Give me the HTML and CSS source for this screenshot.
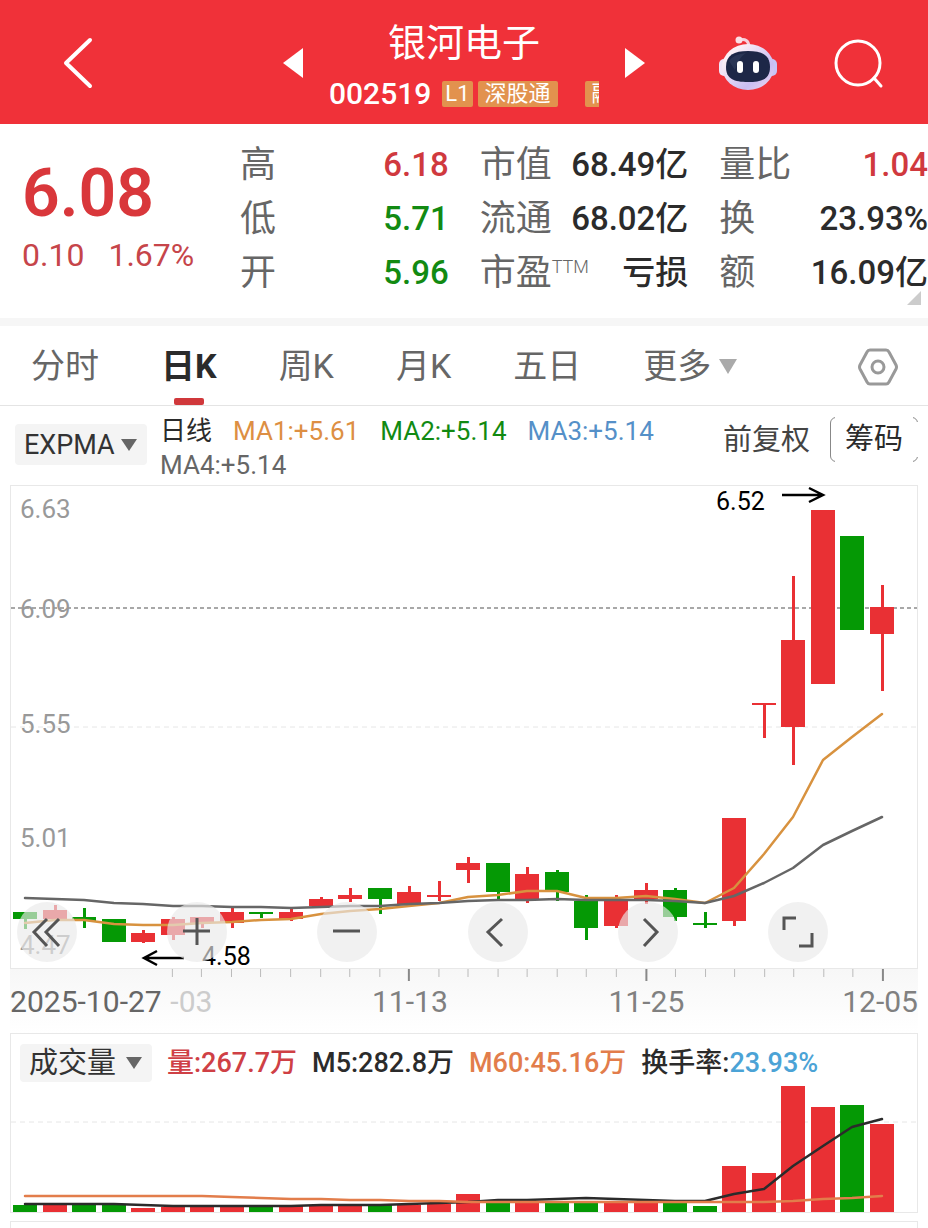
FILE: index.html
```html
<!DOCTYPE html>
<html lang="zh-CN">
<head>
    <meta charset="UTF-8">
    <meta name="viewport" content="width=device-width, initial-scale=1.0">
    <title>银河电子 002519</title>
    <link rel="stylesheet" href="styles.css">
</head>
<body>
    <!-- Header -->
    <header class="header">
        <button class="icon-button back" aria-label="返回">
            <svg width="32" height="54" viewBox="0 0 32 54"><path d="M28 4 L4 27 L28 50" fill="none" stroke="#fff" stroke-width="4" stroke-linecap="round" stroke-linejoin="round"/></svg>
        </button>
        <div class="switcher">
            <button class="icon-button" aria-label="上一只">
                <svg width="20" height="30" viewBox="0 0 20 30"><path d="M0 15 L20 0 V30 Z" fill="#fff"/></svg>
            </button>
            <div class="stock">
                <h1>银河电子</h1>
                <div class="stock-code">
                    <span class="code">002519</span>
                    <span class="tag level">L1</span>
                    <span class="tag">深股通</span>
                    <span class="tag last">融</span>
                </div>
            </div>
            <button class="icon-button" aria-label="下一只">
                <svg width="20" height="30" viewBox="0 0 20 30"><path d="M0 0 L20 15 L0 30 Z" fill="#fff"/></svg>
            </button>
        </div>
        <div class="actions">
            <button class="icon-button" aria-label="智能助手">
                <svg width="60" height="56" viewBox="0 0 60 56">
                    <defs>
                        <linearGradient id="shell" x1="0" y1="0" x2="1" y2="1">
                            <stop offset="0.2" stop-color="#fbeff6"/>
                            <stop offset="0.7" stop-color="#c9bdf2"/>
                            <stop offset="1" stop-color="#f3d9ee"/>
                        </linearGradient>
                    </defs>
                    <path d="M22 4 Q30 2 31 10" fill="none" stroke="#f7cfdc" stroke-width="3"/>
                    <circle cx="21" cy="4" r="3.5" fill="#fbdfe6"/>
                    <rect x="1" y="23" width="10" height="17" rx="5" fill="#f0e4f7"/>
                    <rect x="49" y="23" width="10" height="17" rx="5" fill="#c7c4f6"/>
                    <ellipse cx="30" cy="31" rx="26" ry="23" fill="url(#shell)"/>
                    <path d="M30 15 C44 15 52 19 52 31 C52 43 44 46 30 46 C16 46 8 43 8 31 C8 19 16 15 30 15 Z" fill="#1d2747"/>
                    <path d="M11 25 Q16 18 28 17 Q20 22 17 34 Z" fill="#33405f" opacity="0.6"/>
                    <rect x="19" y="25" width="6" height="12" rx="3" fill="#fff"/>
                    <rect x="35" y="25" width="6" height="12" rx="3" fill="#fff"/>
                </svg>
            </button>
            <button class="icon-button" aria-label="搜索">
                <svg width="50" height="50" viewBox="0 0 50 50" fill="none" stroke="#fff" stroke-width="3" stroke-linecap="round"><circle cx="24" cy="24" r="22"/><path d="M40 39 L47 47"/></svg>
            </button>
        </div>
    </header>

    <!-- Quote -->
    <section class="quote">
        <div class="price">
            <strong>6.08</strong>
            <p><span>0.10</span><span>1.67%</span></p>
        </div>
        <dl class="stats">
            <div><dt>高</dt><dd class="up">6.18</dd></div>
            <div><dt>市值</dt><dd>68.49亿</dd></div>
            <div><dt>量比</dt><dd class="up">1.04</dd></div>
            <div><dt>低</dt><dd class="down">5.71</dd></div>
            <div><dt>流通</dt><dd>68.02亿</dd></div>
            <div><dt>换</dt><dd>23.93%</dd></div>
            <div><dt>开</dt><dd class="down">5.96</dd></div>
            <div><dt>市盈<sup>TTM</sup></dt><dd>亏损</dd></div>
            <div><dt>额</dt><dd>16.09亿</dd></div>
        </dl>
    </section>

    <!-- Period tabs -->
    <nav class="tabs">
        <button>分时</button>
        <button class="active">日K</button>
        <button>周K</button>
        <button>月K</button>
        <button>五日</button>
        <button class="more">更多<span class="arrow"></span></button>
        <button class="settings" aria-label="设置">
            <svg width="40" height="40" viewBox="0 0 40 40" fill="none" stroke="#999" stroke-width="3" stroke-linejoin="round"><path d="M12 3 H28 Q30 3 31 5 L38 18 Q39 20 38 22 L31 35 Q30 37 28 37 H12 Q10 37 9 35 L2 22 Q1 20 2 18 L9 5 Q10 3 12 3 Z"/><circle cx="20" cy="20" r="6"/></svg>
        </button>
    </nav>

    <!-- Indicator row -->
    <div class="indicator">
        <div class="picker">
            <select aria-label="指标"><option>EXPMA</option></select>
            <span class="arrow"></span>
        </div>
        <div class="legend">
            <span>日线</span>
            <span class="ma1">MA1:+5.61</span>
            <span class="ma2">MA2:+5.14</span>
            <span class="ma3">MA3:+5.14</span>
            <span class="ma4">MA4:+5.14</span>
        </div>
        <button class="adjust">前复权</button>
        <button class="chips">筹码</button>
    </div>

    <main class="charts">
        <div class="panel">
            <svg id="kline" class="chart" viewBox="0 0 906 482">
                <path class="grid-strong" d="M0 122 H906"/>
                <path class="grid" d="M0 241 H906"/>
                <g class="scale">
                    <text x="9" y="32">6.63</text>
                    <text x="9" y="132">6.09</text>
                    <text x="9" y="247">5.55</text>
                    <text x="9" y="361">5.01</text>
                    <text x="9" y="468">4.47</text>
                </g>
            </svg>
            <div class="chart-controls">
                <button aria-label="最早"><svg viewBox="0 0 60 60"><path d="M30 17 L17 30 L30 44 M42 17 L29 30 L42 44"/></svg></button>
                <button aria-label="放大"><svg viewBox="0 0 60 60"><path d="M30 16 V43 M16 29 H43"/></svg></button>
                <button aria-label="缩小"><svg viewBox="0 0 60 60"><path d="M16 29 H43"/></svg></button>
                <button aria-label="左移"><svg viewBox="0 0 60 60"><path d="M34 17 L20 30 L34 44"/></svg></button>
                <button aria-label="右移"><svg viewBox="0 0 60 60"><path d="M26 17 L39 30 L26 44"/></svg></button>
                <button aria-label="全屏"><svg viewBox="0 0 60 60"><path d="M16 28 V16 H28 M44 31 V44 H31"/></svg></button>
            </div>
        </div>

        <svg id="axis" class="axis" viewBox="0 0 906 64">
            <text class="first" x="0" y="43">2025-10-27</text>
            <text class="faded" x="160" y="43">-03</text>
            <text x="399" y="43" text-anchor="middle">11-13</text>
            <text x="635" y="43" text-anchor="middle">11-25</text>
            <text x="906" y="43" text-anchor="end">12-05</text>
        </svg>

        <div class="panel">
            <div class="volume-head">
                <div class="picker">
                    <select aria-label="副图指标"><option>成交量</option></select>
                    <span class="arrow"></span>
                </div>
                <span class="vol">量:267.7万</span>
                <span>M5:282.8万</span>
                <span class="m60">M60:45.16万</span>
                <span>换手率:<b>23.93%</b></span>
            </div>
            <svg id="volume" class="chart" viewBox="0 0 906 130">
                <path class="grid" d="M0 40 H906"/>
            </svg>
        </div>
        <div class="panel next"></div>
    </main>

    <script src="chart.js"></script>
</body>
</html>
```

FILE: styles.css
```css
* {
    box-sizing: border-box;
}

body {
    margin: 0;
    font-family: Roboto, "Noto Sans CJK SC", sans-serif;
    color: #2b2b2b;
    background-color: #fff;
}

button {
    padding: 0;
    border: none;
    background: none;
    font: inherit;
    color: inherit;
    cursor: pointer;
}

svg {
    display: block;
}

/* Header */
.header {
    display: grid;
    grid-template-columns: 1fr auto 1fr;
    align-items: center;
    padding: 16px 44px 15px 62px;
    background-color: #f03139;
    color: #fff;
}

.back {
    justify-self: start;
}

.switcher {
    display: flex;
    align-items: center;
    gap: 26px;
    margin-left: -18px;
}

.stock {
    width: 270px;
}

    .stock h1 {
        margin: 0 0 8px;
        font-size: 38px;
        font-weight: 400;
        line-height: 54px;
        text-align: center;
    }

.stock-code {
    display: flex;
    align-items: center;
    overflow: hidden;
    white-space: nowrap;
}

.code {
    margin-right: 11px;
    font-size: 30px;
    font-weight: 500;
    line-height: 31px;
}

.tag {
    flex: none;
    margin-right: 5px;
    padding: 0 7px;
    border-radius: 2px;
    background-color: #e2924e;
    font-size: 22px;
    line-height: 26px;
}

    .tag.level {
        padding: 0 3px;
    }

    .tag.last {
        margin-left: 22px;
    }

.actions {
    display: flex;
    justify-content: flex-end;
    align-items: center;
    gap: 56px;
    padding-top: 2px;
}

/* Quote */
.quote {
    position: relative;
    display: grid;
    grid-template-columns: 218px 1fr;
    padding: 14px 0 18px 22px;
    border-bottom: 8px solid #f6f6f6;
}

    .quote::after {
        content: "";
        position: absolute;
        right: 7px;
        bottom: 13px;
        border-left: 14px solid transparent;
        border-bottom: 14px solid #ccc;
    }

.price {
    padding-top: 21px;
    color: #d9373b;
}

    .price strong {
        display: block;
        font-size: 66px;
        font-weight: 600;
        line-height: 70px;
    }

    .price p {
        display: flex;
        gap: 24px;
        margin: 0;
        font-size: 32px;
        font-weight: 400;
        line-height: 52px;
        color: #c6454a;
    }

.stats {
    display: grid;
    grid-template-columns: repeat(3, 1fr);
    column-gap: 31px;
    margin: 0;
    line-height: 54px;
}

    .stats div {
        display: flex;
        justify-content: space-between;
        height: 54px;
        white-space: nowrap;
    }

    .stats dt {
        font-size: 36px;
        color: #666;
    }

    .stats dd {
        margin: 0;
        font-size: 33px;
        font-weight: 500;
    }

    .stats sup {
        font-size: 18px;
        font-weight: 300;
        line-height: 18px;
        vertical-align: 12px;
    }

    .stats .up {
        color: #d0393e;
    }

    .stats .down {
        color: #128a12;
    }

/* Tabs */
.tabs {
    display: flex;
    align-items: center;
    gap: 62px;
    height: 80px;
    padding: 0 30px 0 31px;
    border-bottom: 1px solid #e4e4e4;
    font-size: 34px;
    color: #666;
}

    .tabs button {
        position: relative;
        padding-top: 2px;
        line-height: 77px;
        white-space: nowrap;
    }

    .tabs .active {
        font-weight: 700;
        color: #2b2b2b;
    }

        .tabs .active::after {
            content: "";
            position: absolute;
            left: 50%;
            bottom: 0;
            width: 30px;
            height: 7px;
            margin-left: -15px;
            border-radius: 2px;
            background-color: #d0383b;
        }

    .tabs .more {
        display: flex;
        align-items: center;
        gap: 8px;
    }

    .tabs .settings {
        margin-left: auto;
    }

.arrow {
    border-top: 12px solid #666;
    border-left: 8px solid transparent;
    border-right: 8px solid transparent;
}

.more .arrow {
    border-top: 15px solid #aaa;
    border-left-width: 9px;
    border-right-width: 9px;
}

/* Indicator row */
.indicator {
    display: flex;
    align-items: flex-start;
    padding: 8px 10px 3px 15px;
}

.picker {
    position: relative;
    flex: none;
}

.indicator .picker {
    margin-top: 10px;
}

    .picker select {
        appearance: none;
        display: block;
        height: 41px;
        padding: 0 32px 0 9px;
        border: none;
        border-radius: 4px;
        background-color: #f4f4f4;
        font-family: inherit;
        font-size: 27px;
        color: #333;
    }

    .picker .arrow {
        position: absolute;
        right: 10px;
        top: 50%;
        margin-top: -6px;
        pointer-events: none;
    }

.legend {
    flex: 1;
    display: flex;
    flex-wrap: wrap;
    column-gap: 21px;
    margin-left: 13px;
    font-size: 26px;
    line-height: 34px;
}

.ma1 {
    color: #dd8f43;
}

.ma2 {
    color: #128a12;
}

.ma3 {
    color: #5590c8;
}

.ma4 {
    color: #666;
}

.adjust,
.chips {
    margin-top: 3px;
    font-size: 29px;
    line-height: 46px;
}

.adjust {
    margin-right: 20px;
    color: #444;
}

.chips {
    position: relative;
    z-index: 0;
    padding: 0 14px;
    border: 1px solid #888;
    border-radius: 6px;
    line-height: 43px;
}

    /* leave only the left edge and the corners of the frame */
    .chips::before,
    .chips::after {
        content: "";
        position: absolute;
        z-index: -1;
        background-color: #fff;
    }

    .chips::before {
        inset: -1px 4px;
    }

    .chips::after {
        inset: 4px -1px 4px 4px;
    }

/* Charts */
.charts {
    padding: 0 10px;
}

.panel {
    position: relative;
    border: 1px solid #e8e8e8;
}

.chart {
    width: 100%;
    height: auto;
}

.grid,
.grid-strong {
    fill: none;
    stroke: #e6e6e6;
    stroke-width: 1;
    stroke-dasharray: 5 4;
}

.grid-strong {
    stroke: #a8a8a8;
    stroke-width: 2;
    stroke-dasharray: 4 3;
}

.scale {
    font-size: 26px;
    fill: #999;
}

.up-fill {
    fill: #e93034;
}

.down-fill {
    fill: #059905;
}

.line {
    fill: none;
    stroke-width: 2.5;
    stroke-linejoin: round;
    stroke-linecap: round;
}

.line-ma1 {
    stroke: #d8923f;
}

.line-ma4 {
    stroke: #666;
}

.line-m5 {
    stroke: #2b2b2b;
}

.line-m60 {
    stroke: #e27d4b;
}

.mark {
    font-size: 25px;
    fill: #000;
}

.mark-arrow {
    fill: none;
    stroke: #000;
    stroke-width: 2.5;
}

.chart-controls {
    position: absolute;
    left: 6px;
    right: 89px;
    bottom: 6px;
    display: flex;
    justify-content: space-between;
}

    .chart-controls button {
        width: 60px;
        height: 60px;
        border-radius: 50%;
        background-color: rgba(234, 234, 234, 0.65);
    }

    .chart-controls path {
        fill: none;
        stroke: #555;
        stroke-width: 3;
    }

.axis {
    width: 100%;
    height: auto;
    background: linear-gradient(#f7f7f7, #fff);
    font-size: 30px;
    fill: #808080;
}

    .axis .first {
        fill: #666;
    }

    .axis .faded {
        fill: #ccc;
    }

.tick {
    stroke: #bbb;
    stroke-width: 1;
}

.tick-major {
    stroke: #888;
    stroke-width: 2;
}

/* Volume */
.volume-head {
    display: flex;
    align-items: center;
    gap: 15px;
    height: 48px;
    padding: 9px 0 0 9px;
    font-size: 27px;
    line-height: 38px;
    white-space: nowrap;
}

    .volume-head select {
        height: 38px;
        padding-right: 35px;
        font-size: 29px;
    }

    .volume-head span {
        font-weight: 500;
    }

    .volume-head b {
        font-weight: 500;
        color: #4ba3d6;
    }

.volume-head .vol {
    color: #cf4045;
}

.volume-head .m60 {
    color: #e27d4b;
}

.next {
    height: 7px;
    margin-top: 8px;
    border-bottom: none;
}
```

FILE: chart.js
```js
const SVG_NS = 'http://www.w3.org/2000/svg';
const FIRST_X = 14;
const STEP = 29.55;
const BAR = 24;

// [direction, body top, body bottom, high, low]
const candles = [
    ['down', 426, 433, 426, 443], ['up', 424, 433, 419, 433], ['down', 431, 435, 422, 442],
    ['down', 433, 456, 433, 456], ['up', 447, 456, 444, 457], ['up', 433, 449, 431, 454],
    ['up', 431, 437, 431, 442], ['up', 426, 437, 422, 442], ['down', 426, 428, 426, 432],
    ['up', 426, 433, 423, 435], ['up', 413, 420, 411, 420], ['up', 409, 413, 402, 416],
    ['down', 402, 413, 402, 428], ['up', 406, 419, 400, 419], ['up', 409, 411, 395, 415],
    ['up', 377, 384, 371, 397], ['down', 377, 406, 377, 413], ['up', 388, 414, 381, 417],
    ['down', 386, 406, 384, 415], ['down', 415, 442, 409, 454], ['up', 415, 440, 409, 442],
    ['up', 404, 413, 397, 418], ['down', 404, 431, 402, 435], ['down', 437, 439, 426, 442],
    ['up', 332, 435, 332, 440], ['up', 217, 219, 217, 252], ['up', 154, 241, 90, 279],
    ['up', 24, 198, 24, 198], ['down', 50, 144, 50, 144], ['up', 121, 148, 99, 205]
];
const ma1 = [437, 434, 434, 438, 439, 439, 437, 436, 434, 433, 428, 425, 423, 420, 417, 411, 409, 405, 405, 412, 412, 410, 413, 417, 402, 368, 331, 274, 251, 228];
const ma4 = [412, 413, 414, 417, 418, 420, 420, 421, 421, 422, 421, 420, 420, 418, 417, 415, 414, 414, 413, 414, 414, 414, 415, 417, 410, 397, 382, 359, 345, 331];

const volumes = [7, 7, 7, 7, 4, 5, 6, 6, 6, 6, 6, 6, 7, 7, 8, 18, 10, 10, 10, 10, 10, 10, 10, 6, 46, 39, 126, 105, 107, 88];
const m5 = [122, 122, 122, 122, 123, 124, 124, 124, 124, 124, 123, 123, 123, 122, 121, 120, 118, 118, 117, 116, 117, 118, 119, 119, 112, 107, 84, 64, 45, 37];
const m60 = [114, 114, 114, 114, 114, 114, 114, 115, 116, 117, 117, 118, 118, 119, 119, 120, 120, 120, 120, 120, 120, 120, 120, 120, 120, 120, 119, 117, 116, 114];

function add(parent, tag, attrs, text) {
    const el = document.createElementNS(SVG_NS, tag);
    for (const name in attrs) {
        el.setAttribute(name, attrs[name]);
    }
    if (text) {
        el.textContent = text;
    }
    parent.appendChild(el);
}

function centerX(i) {
    return Math.round(FIRST_X + i * STEP);
}

function drawLine(svg, values, name) {
    const points = values.map((y, i) => centerX(i) + ',' + y).join(' ');
    add(svg, 'polyline', { points: points, class: 'line ' + name });
}

// K line
const kline = document.getElementById('kline');
candles.forEach(([dir, top, bottom, high, low], i) => {
    const x = centerX(i);
    add(kline, 'rect', { x: x - 1, y: high, width: 3, height: low - high, class: dir + '-fill' });
    add(kline, 'rect', { x: x - BAR / 2, y: top, width: BAR, height: bottom - top, class: dir + '-fill' });
});
drawLine(kline, ma1, 'line-ma1');
drawLine(kline, ma4, 'line-ma4');

// Highest and lowest price
add(kline, 'text', { x: 705, y: 24, class: 'mark' }, '6.52');
add(kline, 'path', { d: 'M771 9 H812 M798 2 L812 9 L798 16', class: 'mark-arrow' });
add(kline, 'text', { x: 191, y: 479, class: 'mark' }, '4.58');
add(kline, 'path', { d: 'M173 472 H133 M146 465 L133 472 L146 479', class: 'mark-arrow' });

// Date ticks
const axis = document.getElementById('axis');
for (let i = 5; i < candles.length; i++) {
    const major = (i - 5) % 8 === 0 && i > 5;
    add(axis, 'line', { x1: centerX(i), x2: centerX(i), y1: 0, y2: major ? 12 : 8, class: major ? 'tick-major' : 'tick' });
}

// Volume
const volume = document.getElementById('volume');
volumes.forEach((h, i) => {
    add(volume, 'rect', { x: centerX(i) - BAR / 2, y: 130 - h, width: BAR, height: h, class: candles[i][0] + '-fill' });
});
drawLine(volume, m5, 'line-m5');
drawLine(volume, m60, 'line-m60');
```
